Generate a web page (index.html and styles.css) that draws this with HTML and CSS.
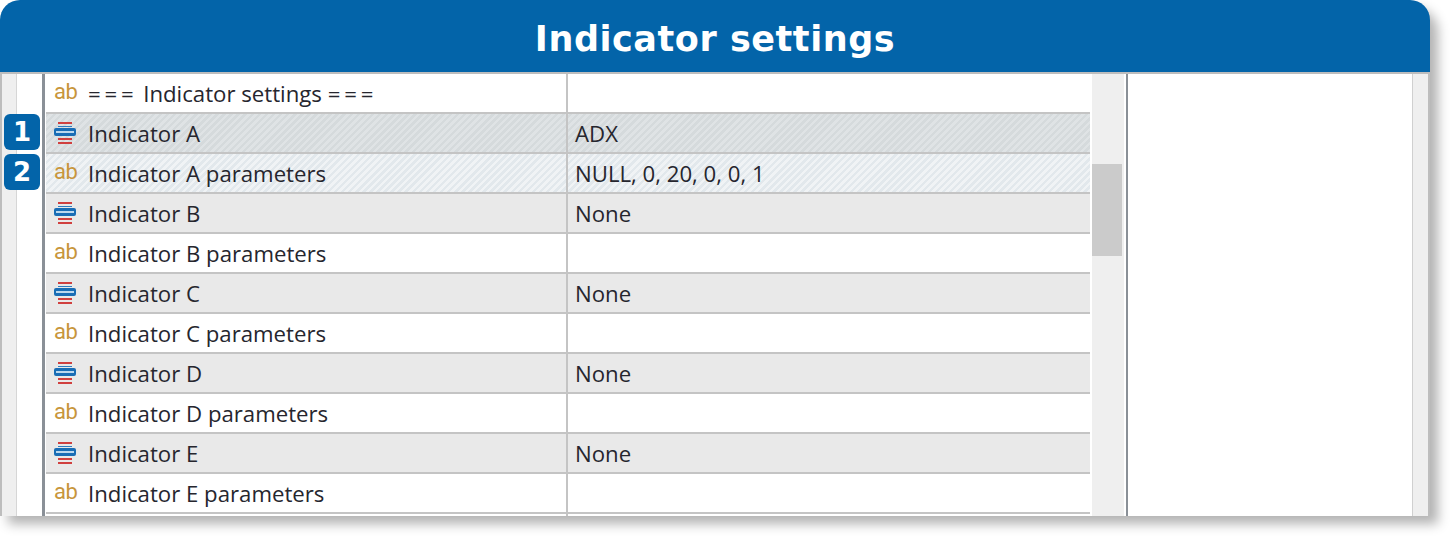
FILE: index.html
```html
<!DOCTYPE html>
<html lang="en">
<head>
  <meta charset="UTF-8">
  <title>Indicator settings</title>
  <link rel="stylesheet" href="styles.css">
</head>
<body>
  <svg class="defs" width="0" height="0">
    <symbol id="enum-icon" viewBox="0 0 24 24">
      <path d="M5 2h14M5 18h14M5 22h14" stroke="#d0403f" stroke-width="2" fill="none"/>
      <path d="M5 5.5h14" stroke="#2f7cc0" stroke-width="1" fill="none"/>
      <rect x="1" y="7" width="22" height="8" rx="2" fill="#1a6db5"/>
      <rect x="3" y="10" width="18" height="2" fill="#bcd8ee"/>
    </symbol>
  </svg>
  <div class="card">
    <h1 class="card-title">Indicator settings</h1>
    <div class="panel">
      <div class="gutter">
        <span class="badge">1</span>
        <span class="badge">2</span>
      </div>
      <div class="table">
        <div class="row">
          <div class="cell name"><span class="ab">ab</span><span><span class="sep">===</span> Indicator settings <span class="sep">===</span></span></div>
          <div class="cell value"></div>
        </div>
        <div class="row hatch-dark">
          <div class="cell name"><svg class="icon"><use href="#enum-icon"/></svg>Indicator A</div>
          <div class="cell value">ADX</div>
        </div>
        <div class="row hatch-light">
          <div class="cell name"><span class="ab">ab</span>Indicator A parameters</div>
          <div class="cell value">NULL, 0, 20, 0, 0, 1</div>
        </div>
        <div class="row grey">
          <div class="cell name"><svg class="icon"><use href="#enum-icon"/></svg>Indicator B</div>
          <div class="cell value">None</div>
        </div>
        <div class="row">
          <div class="cell name"><span class="ab">ab</span>Indicator B parameters</div>
          <div class="cell value"></div>
        </div>
        <div class="row grey">
          <div class="cell name"><svg class="icon"><use href="#enum-icon"/></svg>Indicator C</div>
          <div class="cell value">None</div>
        </div>
        <div class="row">
          <div class="cell name"><span class="ab">ab</span>Indicator C parameters</div>
          <div class="cell value"></div>
        </div>
        <div class="row grey">
          <div class="cell name"><svg class="icon"><use href="#enum-icon"/></svg>Indicator D</div>
          <div class="cell value">None</div>
        </div>
        <div class="row">
          <div class="cell name"><span class="ab">ab</span>Indicator D parameters</div>
          <div class="cell value"></div>
        </div>
        <div class="row grey">
          <div class="cell name"><svg class="icon"><use href="#enum-icon"/></svg>Indicator E</div>
          <div class="cell value">None</div>
        </div>
        <div class="row">
          <div class="cell name"><span class="ab">ab</span>Indicator E parameters</div>
          <div class="cell value"></div>
        </div>
        <div class="row">
          <div class="cell name"></div>
          <div class="cell value"></div>
        </div>
      </div>
      <div class="scrollbar"><div class="thumb"></div></div>
      <div class="side-pane"></div>
      <div class="side-strip"></div>
    </div>
  </div>
</body>
</html>
```
FILE: styles.css
```css
html, body { margin: 0; padding: 0; background: #fff; }
body { width: 1450px; height: 538px; overflow: hidden; font-family: "Open Sans", "Noto Sans", sans-serif; color: #26262e; }
.defs { display: block; }
.card {
  width: 1430px;
  height: 516px;
  border-radius: 24px 24px 0 0;
  box-shadow: 8px 8px 12px rgba(0,0,0,0.3);
  background: #fff;
  display: flex;
  flex-direction: column;
}
.card-title {
  margin: 0;
  height: 72px;
  line-height: 78px;
  flex: none;
  background: #0364a9;
  border-radius: 20px 20px 0 0;
  color: #fff;
  font-family: "DejaVu Sans", sans-serif;
  font-size: 35px;
  font-weight: bold;
  letter-spacing: 0.55px;
  text-align: center;
}
.panel {
  display: flex;
  flex: 1;
  min-height: 0;
  overflow: hidden;
  border-top: 2px solid #bdbdbd;
  border-left: 2px solid #bdbdbd;
  border-right: 2px solid #bdbdbd;
}
.gutter {
  width: 40px;
  flex: none;
  padding: 40px 0 0 2px;
  box-sizing: border-box;
  background: linear-gradient(to right, #efefef 14px, #d6d6d6 14px, #d6d6d6 15px, #fff 15px);
  display: flex;
  flex-direction: column;
  gap: 4px;
}
.badge {
  width: 36px;
  height: 36px;
  flex: none;
  border-radius: 6px;
  background: #0364a9;
  color: #fff;
  font-family: "DejaVu Sans", sans-serif;
  font-size: 26px;
  font-weight: bold;
  line-height: 36px;
  text-align: center;
}
.table {
  width: 1044px;
  flex: none;
  border-left: 3px solid #8a9097;
  padding-left: 1px;
  background: #fff;
}
.row {
  display: flex;
  height: 40px;
  box-sizing: border-box;
  border-bottom: 2px solid #c4c4c4;
  font-size: 22.2px;
  line-height: 38px;
}
.row.grey { background: #e9e9e9; }
.row.hatch-dark { background: repeating-linear-gradient(135deg, #d5dadc 0 2.5px, #dfe3e5 2.5px 5px); }
.row.hatch-light { background: repeating-linear-gradient(135deg, #e2e8ec 0 2.5px, #f0f3f5 2.5px 5px); }
.cell { box-sizing: border-box; white-space: nowrap; }
.name {
  width: 522px;
  padding-top: 2px;
  display: flex;
  align-items: center;
  border-right: 2px solid #c4c4c4;
}
.value { flex: 1; padding: 1px 0 0 7px; }
.sep { letter-spacing: 3.8px; }
.ab {
  width: 42px;
  flex: none;
  padding-left: 8px;
  box-sizing: border-box;
  margin-top: -4px;
  font-family: Roboto, sans-serif;
  color: #c8963c;
  font-size: 22px;
  letter-spacing: -0.5px;
}
.icon {
  width: 24px;
  height: 24px;
  margin: -2px 11px 0 7px;
  flex: none;
}
.scrollbar {
  width: 32px;
  margin-left: 2px;
  flex: none;
  background: #efefef;
}
.thumb {
  width: 30px;
  height: 92px;
  margin-top: 90px;
  background: #cbcbcb;
}
.side-pane {
  flex: 1;
  margin-left: 2px;
  border-left: 2px solid #8a9097;
  border-right: 1px solid #d0d0d0;
  background: #fff;
}
.side-strip { width: 15px; flex: none; background: #efefef; }
```
